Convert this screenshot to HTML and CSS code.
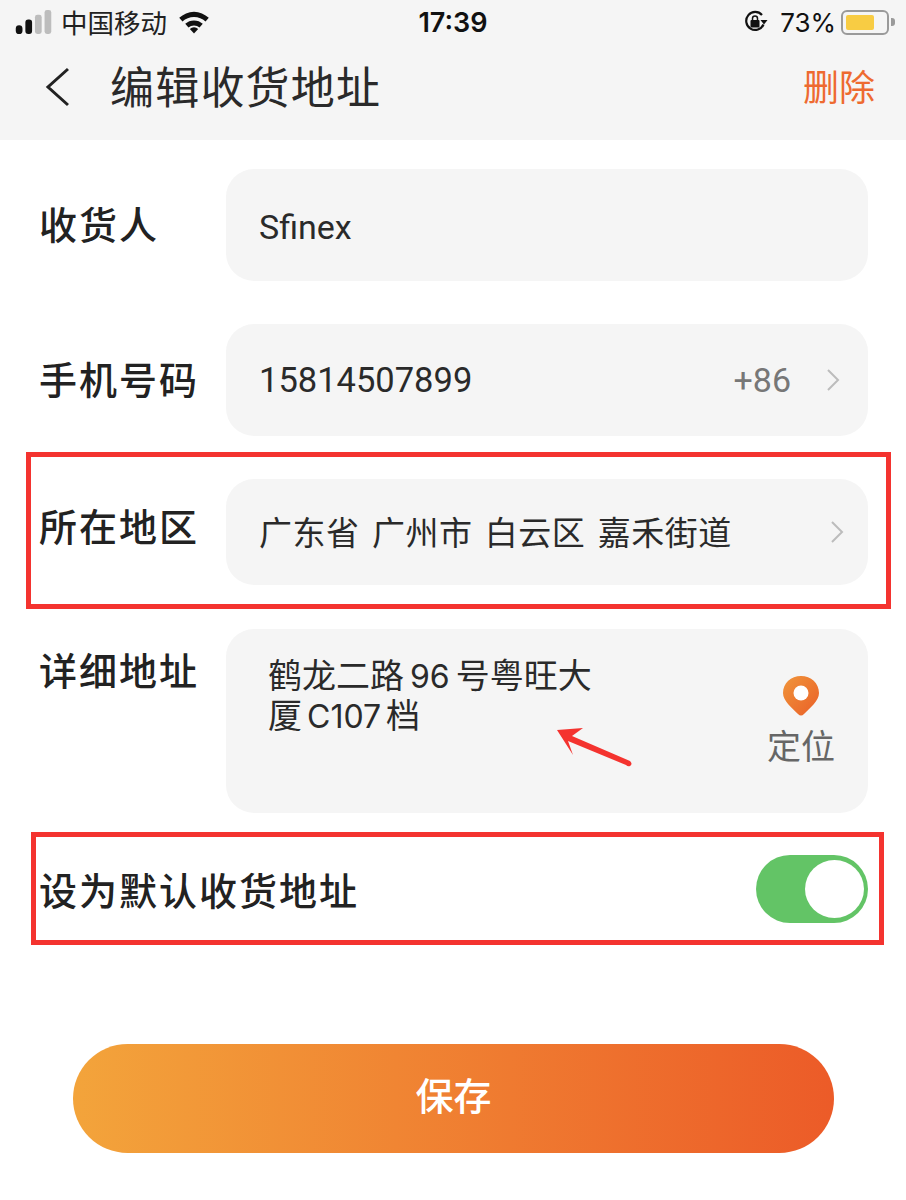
FILE: index.html

```html
<!DOCTYPE html>
<html lang="zh-CN">
<head>
    <meta charset="UTF-8">
    <meta name="viewport" content="width=device-width, initial-scale=1.0">
    <title>编辑收货地址</title>
    <link rel="stylesheet" href="styles.css">
</head>
<body>
    <div class="page">
        <header class="top">
            <div class="status-bar">
                <div class="status-left">
                    <svg class="signal" width="38" height="24" viewBox="0 0 38 25">
                        <rect x="0" y="16" width="7" height="9" rx="3.5" fill="#111"/>
                        <rect x="10" y="10" width="7" height="15" rx="3" fill="#111"/>
                        <rect x="20" y="5" width="7" height="20" rx="2.5" fill="#bdbdbd"/>
                        <rect x="30" y="0" width="7" height="25" rx="2.5" fill="#bdbdbd"/>
                    </svg>
                    <span class="carrier">中国移动</span>
                    <svg class="wifi" width="34" height="24" viewBox="0 0 34 26">
                        <path d="M1 8.5 A23 23 0 0 1 33 8.5 L29.5 12.5 A18 18 0 0 0 4.500 12.5 Z" fill="#111"/>
                        <path d="M7.500 15 A14 14 0 0 1 26.500 15 L23 19 A9 9 0 0 0 11 19 Z" fill="#111"/>
                        <path d="M12.500 20.500 A6.500 6.500 0 0 1 21.500 20.500 L17 25.500 Z" fill="#111"/>
                    </svg>
                </div>
                <div class="status-time">17:39</div>
                <div class="status-right">
                    <svg class="rotation" width="24" height="24" viewBox="0 0 24 24">
                        <path d="M19.500 14.500 A9 9 0 1 1 18 5" fill="none" stroke="#111" stroke-width="2.200"/>
                        <path d="M16.500 10 L23.500 10 L20 14.500 Z" fill="#111"/>
                        <rect x="6.500" y="10" width="9" height="7.500" rx="1" fill="#111"/>
                        <path d="M8.500 10.500 V8.500 A2.500 2.500 0 0 1 13.500 8.500 V10.500" fill="none" stroke="#111" stroke-width="1.500"/>
                    </svg>
                    <span class="battery-text">73%</span>
                    <div class="battery"><div class="battery-level"></div></div>
                    <div class="battery-cap"></div>
                </div>
            </div>
            <div class="nav-bar">
                <svg class="back" width="26" height="40" viewBox="0 0 26 40">
                    <path d="M23 2 L3 20 L23 38" fill="none" stroke="#222" stroke-width="3"/>
                </svg>
                <h1 class="title">编辑收货地址</h1>
                <a class="delete">删除</a>
            </div>
        </header>

        <form class="form">
            <div class="row">
                <label class="label">收货人</label>
                <div class="field field-tall"><span class="value value-name">Sfinex</span></div>
            </div>
            <div class="row">
                <label class="label">手机号码</label>
                <div class="field field-tall">
                    <span class="value value-phone">15814507899</span>
                    <span class="code">+86</span>
                    <svg class="chevron" width="14" height="24" viewBox="0 0 14 24">
                        <path d="M2 2 L12 12 L2 22" fill="none" stroke="#bcbcbc" stroke-width="2"/>
                    </svg>
                </div>
            </div>
            <div class="row row-region">
                <label class="label label-raised">所在地区</label>
                <div class="field field-region">
                    <span class="value value-region">广东省 广州市 白云区 嘉禾街道</span>
                    <svg class="chevron" width="14" height="24" viewBox="0 0 14 24">
                        <path d="M2 2 L12 12 L2 22" fill="none" stroke="#bcbcbc" stroke-width="2"/>
                    </svg>
                </div>
            </div>
            <div class="row row-top">
                <label class="label label-detail">详细地址</label>
                <div class="field field-detail">
                    <div class="address">鹤龙二路<span class="num">96</span>号粤旺大<br>厦<span class="num num-tight">C107</span>档</div>
                    <div class="locate">
                        <svg width="36" height="40" viewBox="0 0 36 40">
                            <defs>
                                <linearGradient id="pinGrad" x1="0" y1="0" x2="1" y2="1">
                                    <stop offset="0" stop-color="#f0953a"/>
                                    <stop offset="1" stop-color="#ea5f28"/>
                                </linearGradient>
                            </defs>
                            <path d="M18 0 C8 0 0 7 0 17 C0 25 9 32 15 38 C17 40 19 40 21 38 C27 32 36 25 36 17 C36 7 28 0 18 0 Z" fill="url(#pinGrad)"/>
                            <circle cx="18" cy="17" r="7.500" fill="#fff"/>
                        </svg>
                        <span class="locate-text">定位</span>
                    </div>
                </div>
            </div>
            <div class="default-row">
                <span class="label label-wide">设为默认收货地址</span>
                <div class="switch"><div class="knob"></div></div>
            </div>
            <button class="save" type="button">保存</button>
        </form>

        <!-- annotations drawn on top of the screenshot -->
        <div class="mark mark-region"></div>
        <div class="mark mark-default"></div>
        <svg class="mark-arrow" width="90" height="50" viewBox="0 0 90 50">
            <path d="M5 6 L31 4 L20 12 L78 37 Q81 40 78 42 Q76 43 74 41 L16 17 L21 31 Z" fill="#f4332f"/>
        </svg>
    </div>
</body>
</html>
```

FILE: styles.css

```css
* {
    margin: 0;
    padding: 0;
    box-sizing: border-box;
}

body {
    background: #fff;
    font-family: "Noto Sans CJK SC", "Liberation Sans", sans-serif;
    color: #222;
}

.page {
    position: relative;
    width: 906px;
    height: 1200px;
    overflow: hidden;
    background: #fff;
}

.top {
    height: 140px;
    background: #f5f5f5;
}

.status-bar {
    height: 44px;
    display: grid;
    grid-template-columns: 1fr auto 1fr;
    align-items: center;
    padding: 0 11px 0 15px;
}

.status-left {
    display: flex;
    align-items: center;
}

.carrier {
    margin-left: 8px;
    font-size: 26.500px;
    line-height: 44px;
    color: #222;
}

.wifi {
    margin-left: 10px;
}

.status-time {
    padding-right: 4px;
    font-family: Inter, "Liberation Sans", sans-serif;
    font-size: 27px;
    font-weight: 600;
    color: #111;
}

.status-right {
    display: flex;
    align-items: center;
    justify-content: flex-end;
}

.battery-text {
    margin-left: 12px;
    margin-right: 5px;
    font-family: Inter, "Liberation Sans", sans-serif;
    font-size: 26px;
    color: #111;
}

.battery {
    width: 48px;
    height: 25px;
    padding: 3px;
    border: 2px solid #9a9a9a;
    border-radius: 6px;
}

.battery-level {
    width: 28px;
    height: 100%;
    background: #f8cc43;
    border-radius: 2px;
}

.battery-cap {
    width: 4px;
    height: 8px;
    margin-left: 2px;
    background: #9a9a9a;
    border-radius: 0 3px 3px 0;
}

.nav-bar {
    height: 86px;
    display: flex;
    align-items: center;
    padding: 0 31px 4px 45px;
}

.back {
    margin-top: 4px;
}

.title {
    margin-left: 39px;
    font-size: 44px;
    font-weight: 400;
    letter-spacing: 1.200px;
    color: #2a2a2a;
}

.delete {
    margin-left: auto;
    font-size: 36px;
    color: #ee6a30;
}

.form {
    padding: 29px 38px 0 39px;
}

.row {
    display: flex;
    align-items: center;
    margin-bottom: 43px;
}

.row-region {
    margin-bottom: 44px;
}

.row-top {
    align-items: flex-start;
    margin-bottom: 42px;
}

.label {
    width: 187px;
    flex: none;
    margin-bottom: 4px;
    font-size: 38px;
    font-weight: 500;
    letter-spacing: 2px;
    line-height: 54px;
    color: #222;
}

.label-raised {
    margin-bottom: 14px;
}

.label-detail {
    margin-top: 13px;
}

.label-wide {
    width: auto;
}

.field {
    flex: 1;
    display: flex;
    align-items: center;
    background: #f5f5f5;
    border-radius: 28px;
    padding: 0 28px 0 33px;
}

.field-tall {
    height: 112px;
}

.field-region {
    height: 106px;
    padding-right: 24px;
}

.field-detail {
    height: 184px;
    align-items: flex-start;
    justify-content: space-between;
    padding: 25px 33px 0 42px;
}

.value {
    font-size: 33px;
    color: #2a2a2a;
}

.value-name,
.value-phone {
    font-family: Roboto, "Liberation Sans", sans-serif;
    font-size: 34px;
}

.value-name {
    margin-top: 4px;
}

.value-phone {
    font-size: 34.500px;
}

.value-region {
    margin-bottom: 2px;
    letter-spacing: 0.500px;
    word-spacing: 4.500px;
}

.code {
    margin-left: auto;
    margin-right: 35px;
    font-family: Roboto, "Liberation Sans", sans-serif;
    font-size: 34px;
    color: #777;
}

.field-region .chevron {
    margin-left: auto;
}

.address {
    width: 350px;
    font-size: 34px;
    line-height: 40px;
    color: #2a2a2a;
}

.num {
    margin: 0 6px;
    font-family: Inter, "Liberation Sans", sans-serif;
    font-size: 32px;
    line-height: 1;
}

.num-tight {
    margin: 0 5px;
}

.locate {
    display: flex;
    flex-direction: column;
    align-items: center;
    margin-top: 22px;
}

.locate-text {
    margin-top: 5px;
    font-size: 34px;
    line-height: 48px;
    color: #666;
}

.default-row {
    display: flex;
    align-items: center;
    justify-content: space-between;
    height: 68px;
}

.default-row .label {
    margin-bottom: 0;
}

.switch {
    width: 112px;
    height: 68px;
    padding: 5px 4px;
    display: flex;
    justify-content: flex-end;
    background: #63c466;
    border-radius: 34px;
}

.knob {
    width: 59px;
    height: 58px;
    background: #fff;
    border-radius: 50%;
}

.save {
    display: block;
    width: 761px;
    height: 109px;
    margin: 121px 0 0 34px;
    padding-bottom: 10px;
    border: none;
    border-radius: 55px;
    background: linear-gradient(90deg, #f3a43b, #ec5b28);
    color: #fff;
    font-family: "Noto Sans CJK SC", sans-serif;
    font-size: 38px;
    font-weight: 500;
}

.mark {
    position: absolute;
    border: 5px solid #f4332f;
}

.mark-region {
    left: 26px;
    top: 452px;
    width: 865px;
    height: 157px;
}

.mark-default {
    left: 31px;
    top: 832px;
    width: 853px;
    height: 113px;
}

.mark-arrow {
    position: absolute;
    left: 552px;
    top: 724px;
}
```
